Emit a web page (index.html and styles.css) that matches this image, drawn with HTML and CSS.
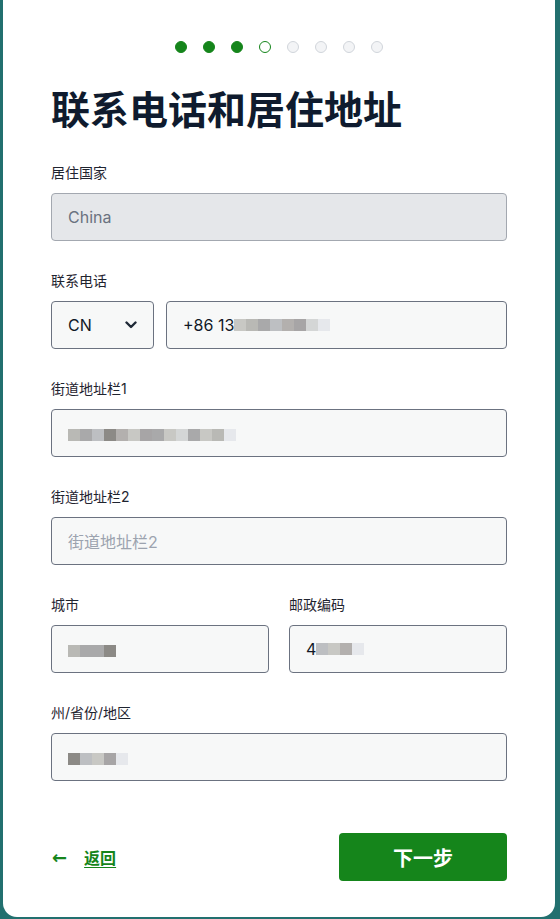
FILE: index.html
```html
<!DOCTYPE html>
<html lang="zh">
<head>
<meta charset="utf-8">
<link rel="stylesheet" href="styles.css">
</head>
<body>
<div class="card">
  <div class="steps">
    <span class="dot done"></span>
    <span class="dot done"></span>
    <span class="dot done"></span>
    <span class="dot current"></span>
    <span class="dot"></span>
    <span class="dot"></span>
    <span class="dot"></span>
    <span class="dot"></span>
  </div>
  <h1 class="title">联系电话和居住地址</h1>

  <div class="field">
    <label class="label">居住国家</label>
    <div class="input disabled">China</div>
  </div>

  <div class="field">
    <label class="label">联系电话</label>
    <div class="phone-row">
      <div class="input select">CN
        <svg class="chev" width="12" height="8" viewBox="0 0 12 8"><path d="M1.5 1.5 L6 6 L10.5 1.5" fill="none" stroke="#1f2937" stroke-width="2.4" stroke-linecap="round" stroke-linejoin="round"/></svg>
      </div>
      <div class="input grow">+86 13<span class="blur"><i class="b1"></i><i class="b2"></i><i class="b3"></i><i class="b4"></i><i class="b5"></i><i class="b6"></i><i class="b7"></i><i class="b8"></i></span></div>
    </div>
  </div>

  <div class="field">
    <label class="label">街道地址栏1</label>
    <div class="input"><span class="blur tall"><i class="b2"></i><i class="b3"></i><i class="b4"></i><i class="b9"></i><i class="b5"></i><i class="b1"></i><i class="b6"></i><i class="b3"></i><i class="b1"></i><i class="b7"></i><i class="b3"></i><i class="b1"></i><i class="b2"></i><i class="b8"></i></span></div>
  </div>

  <div class="field">
    <label class="label">街道地址栏2</label>
    <div class="input placeholder">街道地址栏2</div>
  </div>

  <div class="field two">
    <div class="col">
      <label class="label">城市</label>
      <div class="input"><span class="blur tall"><i class="b2"></i><i class="b3"></i><i class="b3"></i><i class="b9"></i></span></div>
    </div>
    <div class="col">
      <label class="label">邮政编码</label>
      <div class="input">4<span class="blur"><i class="b4"></i><i class="b1"></i><i class="b5"></i><i class="b8"></i></span></div>
    </div>
  </div>

  <div class="field">
    <label class="label">州/省份/地区</label>
    <div class="input"><span class="blur tall"><i class="b9"></i><i class="b4"></i><i class="b1"></i><i class="b6"></i><i class="b8"></i></span></div>
  </div>

  <div class="actions">
    <a class="back" href="#"><span class="arrow">←</span><span class="back-text">返回</span></a>
    <button class="next">下一步</button>
  </div>
</div>
</body>
</html>
```

FILE: styles.css
```css
* { box-sizing: border-box; }
html, body { margin: 0; padding: 0; }
body {
  background: #22706f;
  font-family: Inter, "Noto Sans CJK SC", sans-serif;
  color: #111827;
  width: 560px;
  height: 919px;
  overflow: hidden;
}
.card {
  background: #fff;
  margin: 0 5px 0 3px;
  padding: 41px 48px 36px;
  border-radius: 0 0 14px 14px;
}
.steps {
  display: flex;
  justify-content: center;
  gap: 16px;
}
.dot {
  width: 12px;
  height: 12px;
  border-radius: 50%;
  background: #f3f4f6;
  border: 1px solid #d1d5db;
}
.dot.done { background: #15851b; border-color: #15851b; }
.dot.current { background: #fff; border: 1.5px solid #15851b; }
.title {
  margin: 30px 0 32px;
  font-size: 39px;
  line-height: 48px;
  font-weight: 700;
  color: #0f1b2e;
  font-family: "Noto Sans CJK SC", sans-serif;
}
.field { margin-bottom: 30px; }
.field.two { display: flex; gap: 20px; }
.col { flex: 1; }
.label {
  display: block;
  font-size: 14px;
  line-height: 20px;
  margin-bottom: 10px;
  color: #1f2430;
}
.input {
  height: 48px;
  border: 1px solid #6b7280;
  border-radius: 4px;
  background: #f7f8f8;
  display: flex;
  align-items: center;
  padding: 0 16px;
  font-size: 16px;
  color: #111827;
}
.input.disabled {
  background: #e5e7ea;
  border-color: #a3a8b0;
  color: #6b7280;
}
.input.placeholder { color: #9ca3af; }
.phone-row { display: flex; gap: 12px; }
.select { width: 103px; flex: none; justify-content: space-between; }
.grow { flex: 1; }
.blur { display: inline-flex; height: 12px; }
.blur.tall { height: 12px; margin-top: 4px; }
.blur i { display: block; width: 12px; height: 100%; }
.b1 { background: #c8c8c4; }
.b2 { background: #b9b9b5; }
.b3 { background: #a9a9aa; }
.b4 { background: #bdbfc2; }
.b5 { background: #b3b0ae; }
.b6 { background: #a7a5a6; }
.b7 { background: #d4d6d6; }
.b8 { background: #e6e8ec; }
.b9 { background: #8c8a86; }
.actions {
  display: flex;
  justify-content: space-between;
  align-items: center;
  margin-top: 52px;
}
.back {
  display: flex;
  align-items: center;
  gap: 17px;
  color: #15851b;
  font-weight: 700;
  font-size: 16px;
  text-decoration: none;
  padding-left: 1px;
}
.arrow { font-family: "DejaVu Sans", sans-serif; font-size: 18px; }
.back-text { text-decoration: underline; text-underline-offset: 3px; }
.next {
  width: 168px;
  height: 48px;
  border: none;
  border-radius: 4px;
  background: #15851b;
  color: #fff;
  font-family: "Noto Sans CJK SC", sans-serif;
  font-weight: 700;
  font-size: 20px;
}
```
